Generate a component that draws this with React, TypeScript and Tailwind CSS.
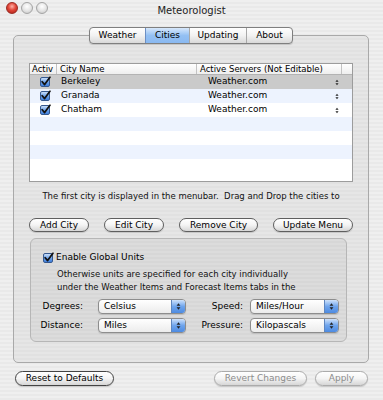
import React from 'react'

// Pinstripe backgrounds of the Aqua window
const WINDOW_BG = 'bg-[repeating-linear-gradient(180deg,#efefef_0px,#efefef_2px,#e9e9e9_2px,#e9e9e9_4px)]'
const TABBOX_BG = 'bg-[repeating-linear-gradient(180deg,#e6e6e6_0px,#e6e6e6_2px,#e1e1e1_2px,#e1e1e1_4px)]'
const GROUP_BG = 'bg-[repeating-linear-gradient(180deg,#dcdcdc_0px,#dcdcdc_2px,#d7d7d7_2px,#d7d7d7_4px)]'

const CITIES = ['Berkeley', 'Granada', 'Chatham']

function Check() {
  return (
    <span className="relative inline-block w-[10px] h-[10px] rounded-[2px] border border-[#35588f] bg-gradient-to-b from-[#c9def8] via-[#6fa3ea] to-[#3f7fdc]">
      <svg viewBox="0 0 10 10" className="absolute -left-px -top-[2px] w-[11px] h-[11px]">
        <path d="M2 5.2 L4.2 7.8 L9 1.2" fill="none" stroke="#111" strokeWidth="1.6" strokeLinecap="round" strokeLinejoin="round" />
      </svg>
    </span>
  )
}

function Arrows({ className = '' }: { className?: string }) {
  return (
    <svg viewBox="0 0 6 10" className={className}>
      <path d="M3 1 L5.3 4 L0.7 4 Z" fill="#222" />
      <path d="M3 9 L5.3 6 L0.7 6 Z" fill="#222" />
    </svg>
  )
}

function Pill({ label, width, disabled, tall }: { label: string; width: string; disabled?: boolean; tall?: boolean }) {
  return (
    <div
      className={`${width} ${tall ? 'h-[15px]' : 'h-[14px]'} rounded-full border flex items-center justify-center bg-gradient-to-b from-white via-[#f4f4f4] to-[#d6d6d6] shadow-[0_1px_1px_rgba(0,0,0,0.15)] ${
        disabled ? 'border-[#ababab] text-[#8c8c8c]' : 'border-[#5f5f5f] text-black'
      }`}
    >
      <span className="text-[9px] leading-none">{label}</span>
    </div>
  )
}

function Popup({ value, width }: { value: string; width: string }) {
  return (
    <div className={`${width} h-[15px] rounded-[4px] border border-[#8d8d8d] flex overflow-hidden bg-gradient-to-b from-white to-[#ececec] shadow-[0_1px_1px_rgba(0,0,0,0.12)]`}>
      <span className="flex-1 pl-[5px] text-[9px] leading-[13px] text-black">{value}</span>
      <span className="w-[14px] border-l border-[#5e86bf] flex items-center justify-center bg-gradient-to-b from-[#cfe2fa] via-[#6ea4ec] to-[#4d8be2]">
        <Arrows className="w-[5px] h-[9px]" />
      </span>
    </div>
  )
}

export default function App() {
  return (
    <div className={`w-[383px] h-[400px] flex flex-col overflow-hidden ${WINDOW_BG} font-['DejaVu_Sans',sans-serif] text-black`}>
      {/* Title bar */}
      <div className="h-[20px] relative flex items-center justify-center">
        <div className="absolute left-[6px] top-[2px] flex gap-[3px]">
          <span className="w-[12px] h-[12px] rounded-full border border-[#9b2a22] bg-[radial-gradient(circle_at_50%_35%,#ffb3a8_0%,#e2473a_45%,#a81d14_100%)]" />
          <span className="w-[12px] h-[12px] rounded-full border border-[#a4a4a4] bg-[radial-gradient(circle_at_50%_35%,#ffffff_0%,#e6e6e6_50%,#c2c2c2_100%)]" />
          <span className="w-[12px] h-[12px] rounded-full border border-[#a4a4a4] bg-[radial-gradient(circle_at_50%_35%,#ffffff_0%,#e6e6e6_50%,#c2c2c2_100%)]" />
        </div>
        <span className="text-[10px] leading-none text-[#222] mt-px">Meteorologist</span>
      </div>

      <div className="pl-[13px] pr-[14px] mt-[7px] flex flex-col">
        {/* Tabs */}
        <div className="relative z-10 flex justify-center">
          <div className="flex h-[17px] rounded-[4px] border border-[#7f7f7f] overflow-hidden bg-gradient-to-b from-white via-[#f2f2f2] to-[#d9d9d9] shadow-[0_1px_1px_rgba(0,0,0,0.15)]">
            <div className="w-[55px] flex items-center justify-center text-[9px]">Weather</div>
            <div className="w-[44px] flex items-center justify-center text-[9px] border-l border-[#6c8fc4] bg-gradient-to-b from-[#d8e8fb] via-[#94c0f3] to-[#8ab9f1]">Cities</div>
            <div className="w-[57px] flex items-center justify-center text-[9px] border-l border-[#a8a8a8]">Updating</div>
            <div className="w-[46px] flex items-center justify-center text-[9px] border-l border-[#a8a8a8]">About</div>
          </div>
        </div>

        {/* Tab box */}
        <div className={`-mt-[9px] h-[328px] rounded-[5px] border border-[#a9a9a9] ${TABBOX_BG} pl-[15px] pt-[27px] flex flex-col`}>
          {/* Table */}
          <div className="w-[324px] h-[119px] border border-[#9c9c9c] bg-white flex flex-col overflow-hidden">
            <div className="h-[11px] flex border-b border-[#b3b3b3] bg-gradient-to-b from-white to-[#eeeeee] text-[8.5px] leading-[10px]">
              <div className="w-[27px] pl-[2px] border-r border-[#c3c3c3]">Activ</div>
              <div className="w-[140px] pl-[3px] border-r border-[#c3c3c3]">City Name</div>
              <div className="w-[145px] pl-[3px] border-r border-[#c3c3c3]">Active Servers (Not Editable)</div>
              <div className="flex-1" />
            </div>
            {CITIES.map((city, i) => (
              <div
                key={city}
                className={`h-[14px] flex items-center text-[9px] ${
                  i === 0 ? 'bg-[#cacaca]' : i % 2 === 1 ? 'bg-[#edf3fe]' : 'bg-white'
                }`}
              >
                <div className="w-[28px] flex justify-center pl-px">
                  <Check />
                </div>
                <div className="w-[140px] pl-[3px]">{city}</div>
                <div className="w-[145px] pl-[10px] flex items-center justify-between pr-[4px]">
                  <span>Weather.com</span>
                  <Arrows className="w-[4px] h-[9px]" />
                </div>
              </div>
            ))}
            <div className="h-[14px] bg-[#edf3fe]" />
            <div className="h-[14px] bg-white" />
            <div className="h-[14px] bg-[#edf3fe]" />
            <div className="flex-1 bg-white" />
          </div>

          <p className="mt-[8px] w-[324px] text-center text-[8.5px] leading-[12px] text-[#111]">
            The first city is displayed in the menubar.&nbsp; Drag and Drop the cities to
          </p>

          <div className="mt-[16px] w-[324px] flex justify-between">
            <Pill label="Add City" width="w-[60px]" />
            <Pill label="Edit City" width="w-[60px]" />
            <Pill label="Remove City" width="w-[79px]" />
            <Pill label="Update Menu" width="w-[80px]" />
          </div>

          {/* Global units group */}
          <div className={`mt-[6px] ml-px w-[317px] h-[104px] rounded-[6px] border border-[#b6b6b6] ${GROUP_BG} pl-[12px] pt-[13px] flex flex-col`}>
            <div className="h-[12px] flex items-center gap-[3px]">
              <Check />
              <span className="text-[9px]">Enable Global Units</span>
            </div>
            <p className="mt-[4px] pl-[14px] text-[8.5px] leading-[13px] text-[#111]">
              Otherwise units are specified for each city individually
              <br />
              under the Weather Items and Forecast Items tabs in the
            </p>
            <div className="mt-[5px] flex flex-col gap-[4px] -ml-[12px]">
              <div className="flex items-center">
                <span className="w-[52px] text-right text-[9px]">Degrees:</span>
                <span className="w-[15px]" />
                <Popup value="Celsius" width="w-[88px]" />
                <span className="w-[57px] text-right text-[9px]">Speed:</span>
                <span className="w-[7px]" />
                <Popup value="Miles/Hour" width="w-[89px]" />
              </div>
              <div className="flex items-center">
                <span className="w-[52px] text-right text-[9px]">Distance:</span>
                <span className="w-[15px]" />
                <Popup value="Miles" width="w-[88px]" />
                <span className="w-[57px] text-right text-[9px]">Pressure:</span>
                <span className="w-[7px]" />
                <Popup value="Kilopascals" width="w-[89px]" />
              </div>
            </div>
          </div>
        </div>

        {/* Bottom buttons */}
        <div className="mt-[8px] flex items-center pl-[2px]">
          <Pill label="Reset to Defaults" width="w-[99px] border-[#444]" tall />
          <div className="flex-1" />
          <Pill label="Revert Changes" width="w-[93px]" disabled tall />
          <div className="w-[8px]" />
          <Pill label="Apply" width="w-[53px]" disabled tall />
          <div className="w-px" />
        </div>
      </div>
    </div>
  )
}
